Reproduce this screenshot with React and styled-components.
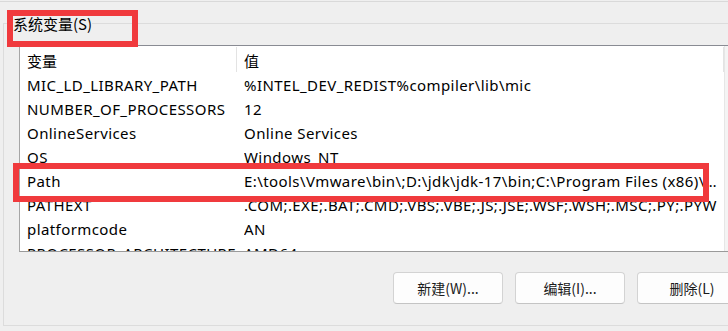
import React from "react";
import styled, { createGlobalStyle } from "styled-components";

const GlobalStyle = createGlobalStyle`
  html, body { margin: 0; padding: 0; background: #efefef; }
  body { font-family: "Noto Sans", "Noto Sans CJK SC", sans-serif; color: #000; }
`;

const Page = styled.div`
  position: relative;
  width: 728px;
  height: 331px;
  overflow: hidden;
  background: #efefef;
  padding-top: 1px;
  box-sizing: border-box;
`;

const TopRule = styled.div`
  height: 1px;
  background: #d9d9d9;
`;

const GroupBox = styled.div`
  margin-top: 21px;
  margin-left: 3px;
  height: 303px;
  box-sizing: border-box;
  border: 1px solid #dcdcdc;
  border-right: none;
  display: flex;
  flex-direction: column;
`;

const Legend = styled.div`
  align-self: flex-start;
  margin: -10px 0 0 9px;
  height: 20px;
  line-height: 20px;
  font-size: 15px;
  background: #efefef;
  color: #000;
  font-family: "Noto Sans CJK SC", "Noto Sans", sans-serif;
`;

const ListBox = styled.div`
  margin: 11px 0 0 15px;
  height: 207px;
  box-sizing: border-box;
  background: #fff;
  border-top: 1px solid #898b93;
  border-left: 1px solid #a6a6a6;
  border-bottom: 1px solid #9a9a9a;
  overflow: hidden;
  display: flex;
`;

const ListInner = styled.div`
  flex: 1;
  min-width: 0;
  display: flex;
  flex-direction: column;
`;

const ScrollTrack = styled.div`
  width: 3px;
  flex: none;
  background: #f4f4f4;
  border-left: 1px solid #e6e6e6;
`;

const HeaderRow = styled.div`
  display: grid;
  grid-template-columns: 217px 1fr;
  height: 27px;
  flex: none;
  font-family: "Noto Sans CJK SC", "Noto Sans", sans-serif;
  font-size: 15px;
`;

const HeaderCell = styled.div`
  padding: 4px 0 0 ${(p) => p.$pad}px;
  line-height: 20px;
  border-right: 1px solid #e3e3e3;
  margin: 1px 0 1px;
`;

const Row = styled.div`
  display: grid;
  grid-template-columns: 224px 1fr;
  height: 24px;
  flex: none;
  line-height: 24px;
  font-size: 15px;
  letter-spacing: 0.42px;
`;

const Cell = styled.div`
  padding-left: ${(p) => p.$pad}px;
  padding-right: ${(p) => p.$right || 0}px;
  white-space: nowrap;
  overflow: hidden;
  text-overflow: ${(p) => (p.$clip ? "clip" : "ellipsis")};
`;

const ButtonRow = styled.div`
  display: flex;
  gap: 12px;
  margin: 20px 0 0 389px;
`;

const Button = styled.button`
  flex: none;
  width: 110px;
  height: 32px;
  box-sizing: border-box;
  background: #fdfdfd;
  border: 1px solid #d3d3d3;
  border-bottom-color: #c4c4c4;
  border-radius: 4px;
  font-family: "Noto Sans CJK SC", "Noto Sans", sans-serif;
  font-size: 14px;
  color: #1a1a1a;
  padding: 0;
`;

const RedBox = styled.div`
  position: absolute;
  box-sizing: border-box;
  border: 6px solid #f03a3d;
  left: ${(p) => p.$x}px;
  top: ${(p) => p.$y}px;
  width: ${(p) => p.$w}px;
  height: ${(p) => p.$h}px;
  pointer-events: none;
`;

const rows = [
  ["MIC_LD_LIBRARY_PATH", "%INTEL_DEV_REDIST%compiler\\lib\\mic"],
  ["NUMBER_OF_PROCESSORS", "12"],
  ["OnlineServices", "Online Services"],
  ["OS", "Windows_NT"],
  ["Path", "E:\\tools\\Vmware\\bin\\;D:\\jdk\\jdk-17\\bin;C:\\Program Files (x86)\\Common Files\\Oracle\\Java\\javapath"],
  ["PATHEXT", ".COM;.EXE;.BAT;.CMD;.VBS;.VBE;.JS;.JSE;.WSF;.WSH;.MSC;.PY;.PYW", true],
  ["platformcode", "AN"],
  ["PROCESSOR_ARCHITECTURE", "AMD64"],
];

export default function App() {
  return (
    <Page>
      <GlobalStyle />
      <TopRule />
      <GroupBox>
        <Legend>系统变量(S)</Legend>
        <ListBox>
          <ListInner>
            <HeaderRow>
              <HeaderCell $pad={7}>变量</HeaderCell>
              <HeaderCell $pad={7}>值</HeaderCell>
            </HeaderRow>
            {rows.map(([k, v, clip]) => (
              <Row key={k}>
                <Cell $pad={7} $right={6} $clip>{k}</Cell>
                <Cell $pad={0} $right={4} $clip={clip}>{v}</Cell>
              </Row>
            ))}
          </ListInner>
          <ScrollTrack />
        </ListBox>
        <ButtonRow>
          <Button>新建(W)...</Button>
          <Button>编辑(I)...</Button>
          <Button>删除(L)</Button>
        </ButtonRow>
      </GroupBox>
      <RedBox $x={7} $y={10} $w={131} $h={37} />
      <RedBox $x={13} $y={163} $w={696} $h={39} />
    </Page>
  );
}
